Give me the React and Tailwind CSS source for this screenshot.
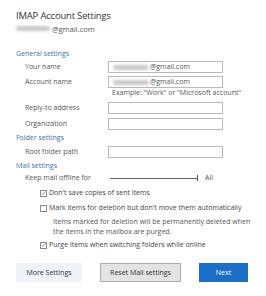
import React from 'react';

const Blur = ({ w }) => (
    <span className={`inline-block h-[5px] bg-[#c8c8c8] blur-[1.5px] rounded-sm ${w}`}></span>
);

const Field = ({ label, children }) => (
    <div className="flex items-center h-[12px]">
        <div className="w-[92px] pl-[9px] text-[#555]">{label}</div>
        <div className="w-[115px] h-[12px] border border-[#b9b9b9] bg-white flex items-center pl-[4px]">
            {children}
        </div>
    </div>
);

const Check = ({ checked, children }) => (
    <div className="flex items-center h-[10px] pl-[24px]">
        <div className="w-[7px] h-[7px] border border-[#8a8a8a] bg-white flex items-center justify-center mr-[2px]">
            {checked && (
                <svg viewBox="0 0 8 8" className="w-[6px] h-[6px]">
                    <path d="M1.2 4.2 L3.1 6 L6.8 1.6" fill="none" stroke="#555" strokeWidth="1" />
                </svg>
            )}
        </div>
        <span className="text-[#444]">{children}</span>
    </div>
);

export default function App() {
    return (
        <div className="w-[266px] h-[296px] bg-white overflow-hidden font-['Open_Sans',sans-serif] text-[7px] leading-[10px] text-[#444]">
            <div className="pl-[16px] pt-[10px] flex flex-col">
                <div className="h-[11px] text-[9.5px] leading-[11px] tracking-[-0.2px] text-[#333]">IMAP Account Settings</div>
                <div className="h-[9px] mt-[3px] flex items-center text-[7.5px] text-[#555]">
                    <Blur w="w-[34px]" />
                    <span className="ml-[2px]">@gmail.com</span>
                </div>

                <div className="h-[9px] mt-[16px] leading-[9px] text-[#3a6fb0]">General settings</div>
                <div className="mt-[3px]">
                    <Field label="Your name">
                        <Blur w="w-[36px]" />
                        <span className="ml-[1px] text-[#555]">@gmail.com</span>
                    </Field>
                </div>
                <div className="mt-[3px]">
                    <Field label="Account name">
                        <Blur w="w-[36px]" />
                        <span className="ml-[1px] text-[#555]">@gmail.com</span>
                    </Field>
                </div>
                <div className="h-[10px] pl-[96px] text-[#555]">Example: "Work" or "Microsoft account"</div>
                <div className="mt-[4px]">
                    <Field label="Reply-to address" />
                </div>
                <div className="mt-[4px]">
                    <Field label="Organization" />
                </div>

                <div className="h-[10px] mt-[3px] text-[#3a6fb0]">Folder settings</div>
                <div className="mt-[3px]">
                    <Field label="Root folder path" />
                </div>

                <div className="h-[10px] mt-[3px] text-[#3a6fb0]">Mail settings</div>
                <div className="h-[10px] mt-[2px] flex items-center">
                    <div className="w-[94px] pl-[9px] text-[#555]">Keep mail offline for</div>
                    <div className="w-[87px] h-px bg-[#666]"></div>
                    <div className="w-px h-[6px] bg-[#555]"></div>
                    <span className="ml-[7px] text-[#555]">All</span>
                </div>

                <div className="mt-[5px]">
                    <Check checked>Don't save copies of sent items</Check>
                </div>
                <div className="mt-[5px]">
                    <Check>Mark items for deletion but don't move them automatically</Check>
                </div>
                <div className="mt-[4px] pl-[37px] pr-[12px] text-[#555]">
                    Items marked for deletion will be permanently deleted when the items in the mailbox are purged.
                </div>
                <div className="mt-[3px]">
                    <Check checked>Purge items when switching folders while online</Check>
                </div>

                <div className="mt-[13px] flex items-center">
                    <button className="w-[66px] h-[19px] bg-[#eef3fa] text-[#333]">More Settings</button>
                    <button className="ml-[18px] w-[81px] h-[19px] bg-[#e3e3e3] border border-[#adadad] text-[#333]">Reset Mail settings</button>
                    <button className="ml-[18px] w-[49px] h-[19px] bg-[#1a6ec6] text-white">Next</button>
                </div>
            </div>
        </div>
    );
}
